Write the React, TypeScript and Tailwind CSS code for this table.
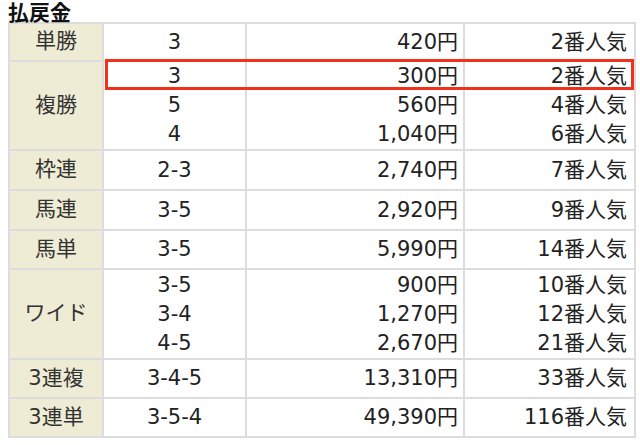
const font = { fontFamily: '"DejaVu Sans", "Noto Sans CJK JP", sans-serif' };

type Row = {
  label: string;
  items: [string, string, string][];
  h: string;
};

const rows: Row[] = [
  { label: "単勝", items: [["3", "420円", "2番人気"]], h: "h-[38px]" },
  {
    label: "複勝",
    items: [
      ["3", "300円", "2番人気"],
      ["5", "560円", "4番人気"],
      ["4", "1,040円", "6番人気"],
    ],
    h: "h-[89px]",
  },
  { label: "枠連", items: [["2-3", "2,740円", "7番人気"]], h: "h-[40px]" },
  { label: "馬連", items: [["3-5", "2,920円", "9番人気"]], h: "h-[40px]" },
  { label: "馬単", items: [["3-5", "5,990円", "14番人気"]], h: "h-[39px]" },
  {
    label: "ワイド",
    items: [
      ["3-5", "900円", "10番人気"],
      ["3-4", "1,270円", "12番人気"],
      ["4-5", "2,670円", "21番人気"],
    ],
    h: "h-[90px]",
  },
  { label: "3連複", items: [["3-4-5", "13,310円", "33番人気"]], h: "h-[39px]" },
  { label: "3連単", items: [["3-5-4", "49,390円", "116番人気"]], h: "h-[39px]" },
];

function Lines({ values }: { values: string[] }) {
  return (
    <div className="flex flex-col justify-center">
      {values.map((v, i) => (
        <div key={i} className="leading-[29px]">
          {v}
        </div>
      ))}
    </div>
  );
}

export default function App() {
  return (
    <div className="relative h-[445px] w-[640px] bg-white text-[#222]" style={font}>
      <h2
        className="h-[22px] pl-[8px] text-[21px] font-bold leading-[23px] text-[#111]"
        style={{ fontFamily: '"Noto Sans CJK JP", sans-serif' }}
      >
        払戻金
      </h2>
      <table className="ml-[8px] w-[626px] table-fixed border-collapse text-[21px]">
        <colgroup>
          <col className="w-[94px]" />
          <col className="w-[143px]" />
          <col className="w-[218px]" />
          <col className="w-[171px]" />
        </colgroup>
        <tbody>
          {rows.map((r) => (
            <tr key={r.label} className={r.h}>
              <td className="border-2 border-[#dcdcdc] bg-[#eeecd5] p-0 text-center text-[#333]">
                {r.label}
              </td>
              <td className="border-2 border-[#dcdcdc] p-0 text-center">
                <Lines values={r.items.map((x) => x[0])} />
              </td>
              <td className="border-2 border-[#dcdcdc] py-0 pl-0 pr-[5px] text-right">
                <Lines values={r.items.map((x) => x[1])} />
              </td>
              <td className="border-2 border-[#dcdcdc] py-0 pl-0 pr-[7px] text-right">
                <Lines values={r.items.map((x) => x[2])} />
              </td>
            </tr>
          ))}
        </tbody>
      </table>
      <div className="pointer-events-none absolute left-[105px] top-[59px] h-[31px] w-[529px] border-[3px] border-[#f0321a]" />
    </div>
  );
}
